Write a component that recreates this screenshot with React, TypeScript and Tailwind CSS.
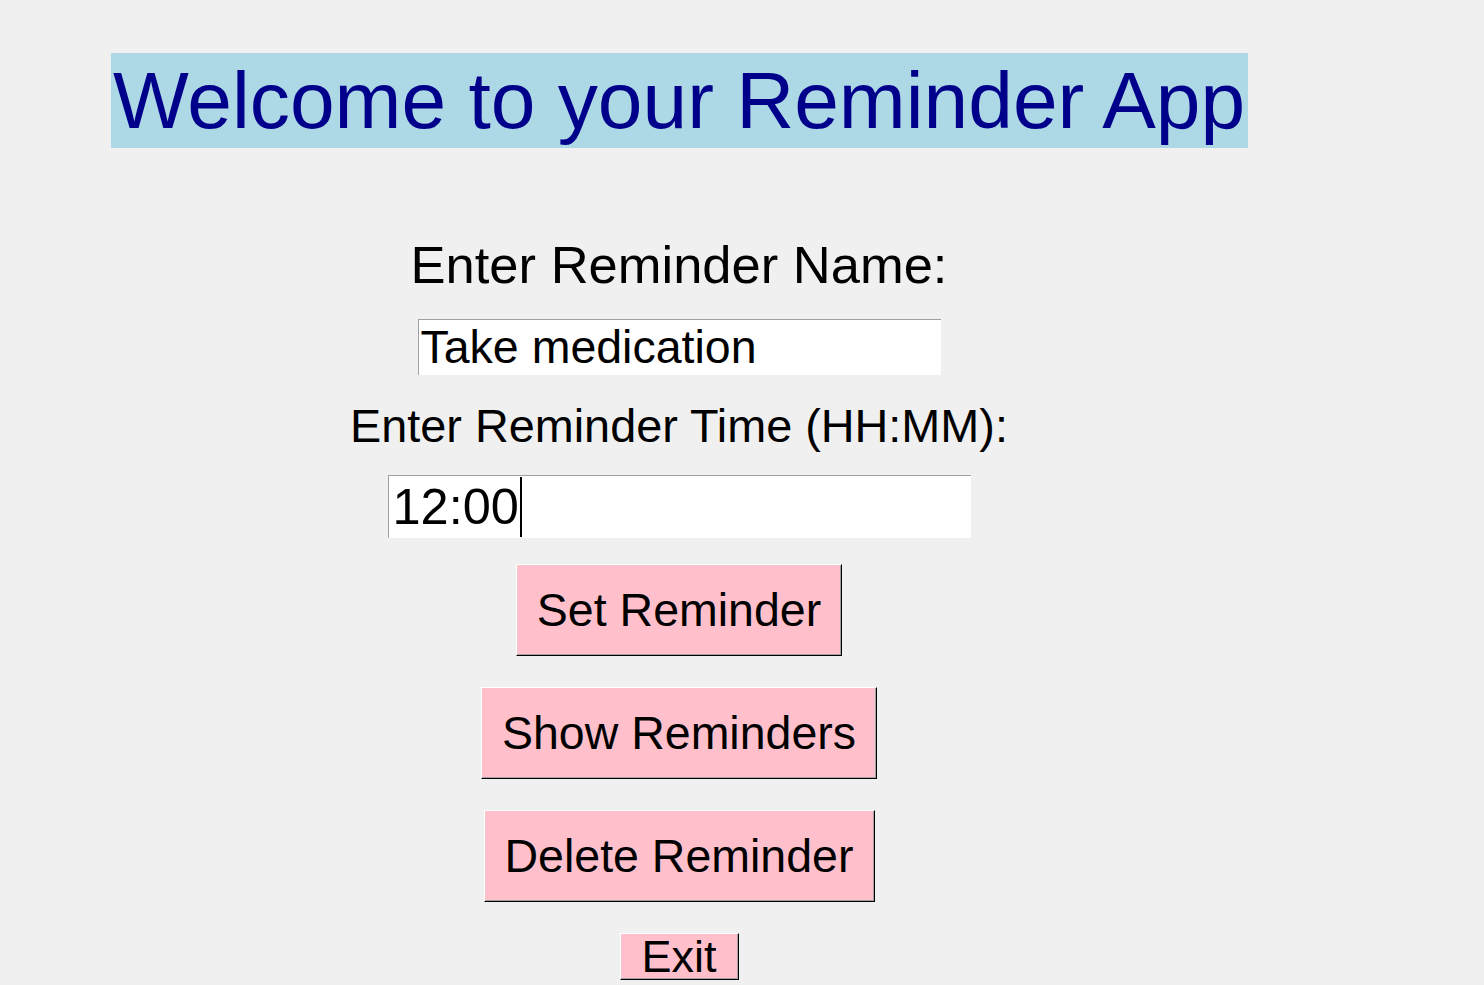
import React from 'react';

const font = { fontFamily: '"Liberation Sans", Arial, sans-serif' };

function TkButton({ label, className = '' }: { label: string; className?: string }) {
  return (
    <div
      className={`flex items-center justify-center bg-[#ffc0cb] text-black leading-none border-t border-l border-white border-r border-b border-r-black border-b-black shadow-[inset_-1px_-1px_0_#a0a0a0] ${className}`}
    >
      {label}
    </div>
  );
}

export default function App() {
  return (
    <div className="min-h-screen w-full bg-[#f0f0f0] overflow-hidden" style={font}>
      <div className="w-[1358px] h-[985px] flex flex-col items-center overflow-hidden">
        {/* Title */}
        <div className="mt-[53px] w-[1137px] h-[95px] bg-[#add8e6] text-[#00008b] text-[80.3px] leading-none flex items-center justify-center">
          Welcome to your Reminder App
        </div>

        <div className="mt-[87px] h-[61px] flex items-center text-[52.5px] leading-none text-black">
          Enter Reminder Name:
        </div>

        {/* name entry */}
        <div className="mt-[23px] w-[523px] h-[56px] bg-white border-t border-l border-[#a0a0a0] flex items-center pl-[2px] text-[46.5px] leading-none text-black">
          Take medication
        </div>

        <div className="mt-[24px] h-[54px] flex items-center text-[46.8px] leading-none text-black">
          Enter Reminder Time (HH:MM):
        </div>

        {/* time entry */}
        <div className="mt-[22px] w-[583px] h-[63px] bg-white border-t border-l border-[#a0a0a0] flex items-center pl-[4px] text-[50.5px] leading-none text-black">
          <span>12:00</span>
          <span className="ml-[1px] w-[2px] h-[60px] bg-black" />
        </div>

        <TkButton label="Set Reminder" className="mt-[26px] w-[326px] h-[92px] text-[46.5px]" />
        <TkButton label="Show Reminders" className="mt-[31px] w-[396px] h-[92px] text-[46.5px]" />
        <TkButton label="Delete Reminder" className="mt-[31px] w-[391px] h-[92px] text-[46.5px]" />
        <TkButton label="Exit" className="mt-[31px] w-[119px] h-[47px] text-[45px]" />
      </div>
    </div>
  );
}
